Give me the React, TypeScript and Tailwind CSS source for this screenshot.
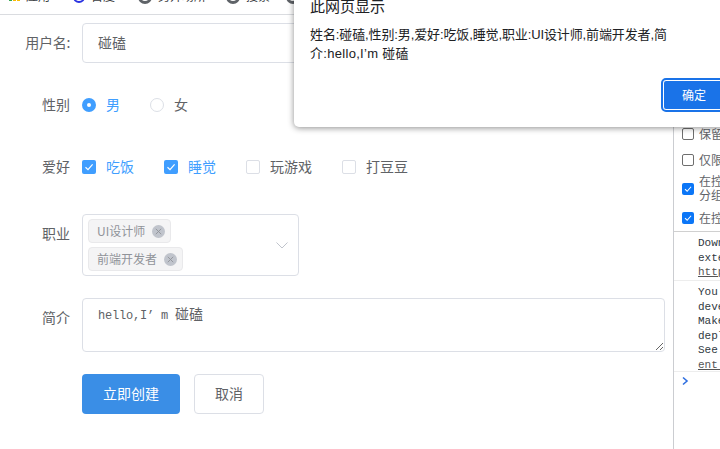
const cjk = "font-['Noto_Sans_CJK_SC','Liberation_Sans',sans-serif]";

const Check = () => (
  <svg viewBox="0 0 14 14" className="w-[14px] h-[14px]" fill="none" stroke="#fff" strokeWidth={1.2}>
    <path d="M3.5 7.2 6 9.6 10.6 4.4" />
  </svg>
);

const CheckItem = ({ label, checked, width }: { label: string; checked?: boolean; width: string }) => (
  <div className={`flex items-center gap-[10px] ${width}`}>
    {checked ? (
      <span className="w-[14px] h-[14px] rounded-[2px] bg-[#409eff] flex items-center justify-center">
        <Check />
      </span>
    ) : (
      <span className="w-[14px] h-[14px] rounded-[2px] border border-[#dcdfe6] bg-white" />
    )}
    <span className={`pb-[2px] ${checked ? "text-[#409eff]" : "text-[#606266]"}`}>{label}</span>
  </div>
);

const Tag = ({ label }: { label: string }) => (
  <span className="h-6 w-fit rounded-[4px] bg-[#f4f4f5] border border-[#e9e9eb] pl-[8px] pr-[5px] flex items-center gap-[7px] text-xs text-[#909399]">
    {label}
    <span className="w-[13px] h-[13px] rounded-full bg-[#c0c4cc] flex items-center justify-center">
      <svg viewBox="0 0 10 10" className="w-[9px] h-[9px]" fill="none" stroke="#909399" strokeWidth={1}>
        <path d="M2 2 8 8M8 2 2 8" />
      </svg>
    </span>
  </span>
);

const Bookmark = ({ label, icon, width }: { label: string; icon: React.ReactNode; width: string }) => (
  <div className={`flex items-end gap-[6px] ${width}`}>
    {icon}
    <span className="text-xs leading-none text-[#3c4043] mb-[12px]">{label}</span>
  </div>
);

const Globe = () => <span className="w-[14px] h-[14px] rounded-full border-[3px] border-[#5f6368] mb-[10px]" />;

export default function App() {
  return (
    <div className={`relative w-[720px] h-[449px] overflow-hidden bg-white flex flex-col ${cjk}`}>
      {/* bookmarks bar, mostly cut off at the top */}
      <div className="h-[15px] shrink-0 border-b border-[#dadce0] flex items-end overflow-hidden pl-[9px]">
        <Bookmark
          width="w-[64px]"
          label="应用"
          icon={
            <span className="flex gap-[1px] mb-[13px]">
              <span className="w-[3px] h-[3px] bg-[#34a853]" />
              <span className="w-[3px] h-[3px] bg-[#fbbc04]" />
              <span className="w-[3px] h-[3px] bg-[#fbbc04]" />
            </span>
          }
        />
        <Bookmark
          width="w-[65px]"
          label="百度"
          icon={<span className="w-[12px] h-[12px] rounded-full border-2 border-[#2932e1] mb-[11px]" />}
        />
        <Bookmark width="w-[88px]" label="另开场所" icon={<Globe />} />
        <Bookmark width="w-[60px]" label="搜索" icon={<Globe />} />
        <Globe />
      </div>

      <div className="flex-1 flex min-h-0">
        {/* form */}
        <div className="flex-1 pl-[25px] pr-[8px] pt-[8px] text-sm text-[#606266]">
          <div className="flex items-center h-10 mb-[22px]">
            <label className="w-[57px] pr-[12px] pb-[2px] text-right whitespace-nowrap tracking-[-0.3px]">用户名:</label>
            <input
              defaultValue="碰磕"
              className="flex-1 h-10 rounded-[4px] border border-[#dcdfe6] px-[15px] pb-[2px] text-sm text-[#606266] outline-none"
            />
          </div>

          <div className="flex items-center h-10 mb-[22px]">
            <label className="w-[57px] pr-[12px] pb-[2px] text-right">性别</label>
            <div className="flex items-center gap-[10px] w-[68px]">
              <span className="w-[14px] h-[14px] rounded-full bg-[#409eff] flex items-center justify-center">
                <span className="w-[4px] h-[4px] rounded-full bg-white" />
              </span>
              <span className="text-[#409eff] pb-[2px]">男</span>
            </div>
            <div className="flex items-center gap-[10px]">
              <span className="w-[14px] h-[14px] rounded-full border border-[#dcdfe6] bg-white" />
              <span className="pb-[2px]">女</span>
            </div>
          </div>

          <div className="flex items-center h-10 mb-[27px]">
            <label className="w-[57px] pr-[12px] pb-[2px] text-right">爱好</label>
            <CheckItem label="吃饭" checked width="w-[82px]" />
            <CheckItem label="睡觉" checked width="w-[82px]" />
            <CheckItem label="玩游戏" width="w-[96px]" />
            <CheckItem label="打豆豆" width="w-[82px]" />
          </div>

          <div className="flex items-start mb-[22px]">
            <label className="w-[57px] pr-[12px] text-right leading-[38px]">职业</label>
            <div className="w-[217px] h-[62px] rounded-[4px] border border-[#dcdfe6] pl-[5px] pr-[9px] flex items-center">
              <div className="flex-1 flex flex-col gap-[4px]">
                <Tag label="UI设计师" />
                <Tag label="前端开发者" />
              </div>
              <svg viewBox="0 0 14 14" className="w-[14px] h-[14px]" fill="none" stroke="#c0c4cc" strokeWidth={1}>
                <path d="M1.5 4.5 7 10l5.5-5.5" />
              </svg>
            </div>
          </div>

          <div className="flex items-start mb-[22px]">
            <label className="w-[57px] pr-[12px] text-right leading-[38px]">简介</label>
            <div className="flex-1 h-[54px] rounded-[4px] border border-[#dcdfe6] px-[15px] py-[4px] leading-[21px] resize-y overflow-auto">
              <span className="font-['Liberation_Mono',monospace] text-[12px] tracking-[-0.2px]">hello,I’ m </span>
              碰磕
            </div>
          </div>

          <div className="flex gap-[14px] pl-[57px]">
            <button className="w-[98px] h-10 rounded-[4px] bg-[#3a8ee6] pb-[2px] text-white text-sm">立即创建</button>
            <button className="w-[70px] h-10 rounded-[4px] border border-[#dcdfe6] bg-white pb-[2px] text-[#606266] text-sm">取消</button>
          </div>
        </div>

        {/* devtools panel */}
        <div className="w-[47px] shrink-0 border-l border-[#cbcdd1] bg-white flex flex-col overflow-hidden text-xs text-[#5f6368] pt-[112px]">
          <div className="flex flex-col pl-[8px] border-b border-[#d0d0d0] h-[105px] whitespace-nowrap leading-[14px]">
            <div className="flex items-center gap-[5px] h-[14px] mb-[12px]">
              <span className="w-[12px] h-[12px] shrink-0 rounded-[2px] border border-[#6e6e6e]" />
              保留日志
            </div>
            <div className="flex items-center gap-[5px] h-[14px] mb-[7px]">
              <span className="w-[12px] h-[12px] shrink-0 rounded-[2px] border border-[#6e6e6e]" />
              仅限顶层
            </div>
            <div className="flex gap-[5px] mb-[9px]">
              <span className="w-[12px] h-[12px] shrink-0 rounded-[2px] bg-[#0b76f7] flex items-center justify-center mt-[9px]">
                <Check />
              </span>
              <span>
                在控制台
                <br />
                分组相似
              </span>
            </div>
            <div className="flex items-center gap-[5px] h-[14px]">
              <span className="w-[12px] h-[12px] shrink-0 rounded-[2px] bg-[#0b76f7] flex items-center justify-center">
                <Check />
              </span>
              在控制台
            </div>
          </div>
          <div className="font-['Liberation_Mono',monospace] text-[11px] leading-[14.6px] text-[#303942] whitespace-nowrap">
            <div className="h-[49px] pt-[4px] border-b border-[#ededed] pl-[24px]">
              <div>Download</div>
              <div>extensions</div>
              <div className="underline text-[#555]">https://</div>
            </div>
            <div className="h-[91px] pt-[4px] border-b border-[#ededed] pl-[24px]">
              <div>You are</div>
              <div>development</div>
              <div>Make sure</div>
              <div>deployment</div>
              <div>See more</div>
              <div className="underline text-[#555]">ent mode</div>
            </div>
          </div>
          <svg viewBox="0 0 10 10" className="w-[10px] h-[10px] ml-[6px] mt-[4px]" fill="none" stroke="#2f6fe0" strokeWidth={1.6}>
            <path d="M3 1.5 7 5 3 8.5" />
          </svg>
        </div>
      </div>

      {/* alert dialog */}
      <div className="absolute left-[294px] -top-[11px] w-[448px] h-[138px] rounded-[5px] bg-white shadow-[0_1px_6px_rgba(0,0,0,0.45)] pl-[16px] pr-[17px] pt-[7px] text-[#202124]">
        <div className="text-[15px] leading-[20px]">此网页显示</div>
        <div className="font-['Liberation_Sans','Noto_Sans_CJK_SC',sans-serif] text-[13px] leading-[19px] mt-[9px] w-[362px]">
          <span className="tracking-[-0.12px]">姓名:碰磕,性别:男,爱好:吃饭,睡觉,职业:UI设计师,前端开发者,简</span>
          <span className="tracking-[0.3px]">介:hello,I’m 碰磕</span>
        </div>
        <div className="flex justify-end mt-[17px]">
          <button className="w-[62px] h-[30px] rounded-[3px] bg-[#1a73e8] text-white text-xs border border-white outline-2 outline-[#1a73e8]">
            确定
          </button>
        </div>
      </div>
    </div>
  );
}
